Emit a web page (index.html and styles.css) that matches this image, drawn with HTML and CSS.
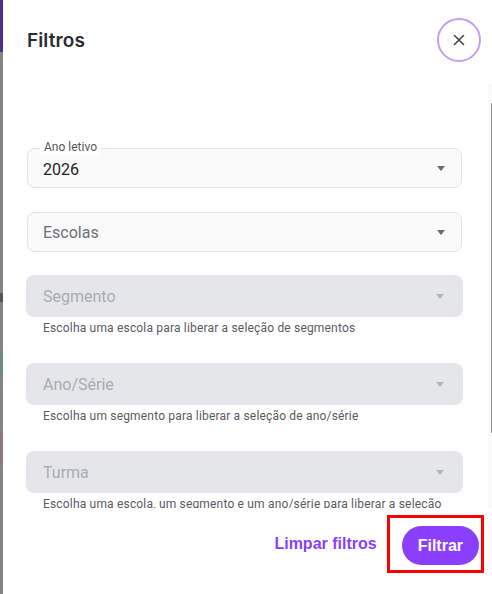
FILE: index.html
```html
<!DOCTYPE html>
<html>
<head>
    <title>Filtros</title>
    <link rel="stylesheet" href="styles.css">
</head>
<body>
    <div class="backdrop">
        <div class="bd-top"></div>
        <div class="bd-gray bd-a"></div>
        <div class="bd-glyph"></div>
        <div class="bd-gray bd-b"></div>
        <div class="bd-green"></div>
        <div class="bd-gray bd-c"></div>
        <div class="bd-pink"></div>
        <div class="bd-gray bd-d"></div>
    </div>

    <div class="panel">
        <div class="panel-header">
            <h2 class="panel-title">Filtros</h2>
            <button class="close-btn" aria-label="Fechar">
                <svg width="12" height="12" viewBox="0 0 12 12">
                    <path d="M1.5 1.5 L10.5 10.5 M10.5 1.5 L1.5 10.5" stroke="#45464d" stroke-width="1.6" stroke-linecap="round"/>
                </svg>
            </button>
        </div>

        <div class="panel-body">
            <div class="field">
                <span class="field-label">Ano letivo</span>
                <span class="field-value">2026</span>
                <span class="caret"></span>
            </div>

            <div class="field field-gap">
                <span class="field-placeholder">Escolas</span>
                <span class="caret"></span>
            </div>

            <div class="field field-disabled field-gap-sm">
                <span class="field-placeholder">Segmento</span>
                <span class="caret"></span>
            </div>
            <p class="helper">Escolha uma escola para liberar a seleção de segmentos</p>

            <div class="field field-disabled field-gap-lg">
                <span class="field-placeholder">Ano/Série</span>
                <span class="caret"></span>
            </div>
            <p class="helper">Escolha um segmento para liberar a seleção de ano/série</p>

            <div class="field field-disabled field-gap-lg">
                <span class="field-placeholder">Turma</span>
                <span class="caret"></span>
            </div>
            <p class="helper">Escolha uma escola, um segmento e um ano/série para liberar a seleção</p>

            <div class="scroll-track"><div class="scroll-thumb"></div></div>
        </div>

        <div class="panel-footer">
            <button class="link-btn">Limpar filtros</button>
            <div class="highlight">
                <button class="primary-btn">Filtrar</button>
            </div>
        </div>
    </div>
</body>
</html>
```

FILE: styles.css
```css
html, body {
    margin: 0;
    padding: 0;
    height: 594px;
    overflow: hidden;
    background: #ffffff;
}

body {
    display: flex;
    font-family: Roboto, "Liberation Sans", sans-serif;
}

/* page behind the drawer, visible as a thin strip */
.backdrop {
    width: 3px;
    display: flex;
    flex-direction: column;
    flex-shrink: 0;
}

.bd-top { height: 52px; background: #4b2f8e; }
.bd-gray { background: #848484; }
.bd-a { height: 241px; }
.bd-glyph { height: 9px; background: #55555a; }
.bd-b { height: 48px; }
.bd-green { height: 30px; background: #6e8c86; }
.bd-c { height: 50px; }
.bd-pink { height: 36px; background: #8e7a80; }
.bd-d { flex: 1; }

.panel {
    flex: 1;
    display: flex;
    flex-direction: column;
    height: 594px;
    background: #ffffff;
}

.panel-header {
    height: 80px;
    display: flex;
    align-items: center;
    justify-content: space-between;
    padding: 0 11px 0 24px;
    flex-shrink: 0;
}

.panel-title {
    margin: 0;
    font-family: Inter, Roboto, sans-serif;
    font-size: 19px;
    font-weight: 600;
    color: #2b2c31;
    letter-spacing: 0.1px;
}

.close-btn {
    width: 44px;
    height: 44px;
    border-radius: 50%;
    border: 2px solid #c29ef7;
    background: #ffffff;
    display: flex;
    align-items: center;
    justify-content: center;
    padding: 0;
}

.panel-body {
    position: relative;
    height: 428px;
    overflow: hidden;
    padding: 68px 30px 0 24px;
    box-sizing: border-box;
    flex-shrink: 0;
}

.field {
    position: relative;
    height: 40px;
    box-sizing: border-box;
    border: 1px solid #e4e4e6;
    border-radius: 8px;
    background: #fafafa;
    display: flex;
    align-items: center;
    padding: 0 15px;
    font-size: 16px;
}

.field-gap { margin-top: 24px; }
.field-gap-sm { margin-top: 23px; }
.field-gap-lg { margin-top: 27px; }

.field-disabled {
    height: 42px;
    border: none;
    background: #e5e6ea;
    margin-left: -1px;
    margin-right: -1px;
    padding: 0 17px;
}

.field-label {
    position: absolute;
    left: 12px;
    top: -9px;
    padding: 0 4px;
    background: #ffffff;
    font-size: 12px;
    line-height: 15px;
    color: #55565c;
}

.field-value {
    color: #1f2024;
    padding-top: 2px;
}

.field-placeholder {
    color: #6e6f75;
}

.field-disabled .field-placeholder {
    color: #a9abb2;
}

.caret {
    margin-left: auto;
    margin-right: 1px;
    width: 0;
    height: 0;
    border-left: 4px solid transparent;
    border-right: 4px solid transparent;
    border-top: 5px solid #6a6b70;
}

.field-disabled .caret {
    border-top-color: #b3b4b9;
    margin-right: 2px;
}

.helper {
    margin: 3px 0 0 16px;
    font-size: 12px;
    line-height: 16px;
    letter-spacing: 0.18px;
    color: #5a5b61;
    white-space: nowrap;
}

.scroll-track {
    position: absolute;
    right: 0;
    top: 4px;
    width: 4px;
    height: 424px;
    background: #fbfbfb;
}

.scroll-thumb {
    margin: 19px 0 0 3px;
    width: 1px;
    height: 330px;
    background: #8d8d8d;
}

.panel-footer {
    flex: 1;
    display: flex;
    align-items: center;
    justify-content: flex-end;
    gap: 10px;
    padding: 0 8px 14px 0;
}

.link-btn {
    border: none;
    background: none;
    padding: 0;
    font-family: "Liberation Sans", Arial, sans-serif;
    font-size: 16px;
    font-weight: 700;
    color: #8a3ffc;
}

.highlight {
    border: 3px solid #ff0000;
    padding: 8px 2px 5px 12px;
}

.primary-btn {
    display: block;
    height: 39px;
    padding: 0 16px;
    border: none;
    border-radius: 20px;
    background: #8a3ffc;
    color: #ffffff;
    font-family: "Liberation Sans", Arial, sans-serif;
    font-size: 16px;
    font-weight: 700;
}
```
